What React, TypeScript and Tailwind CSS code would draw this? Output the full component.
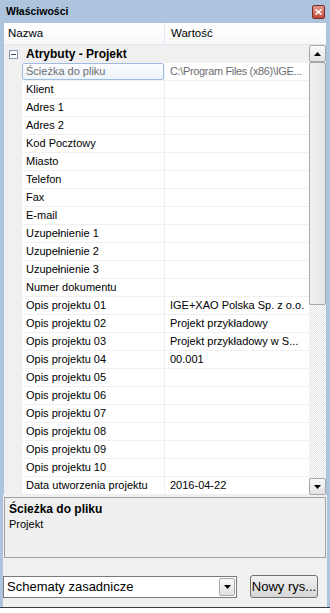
import React from "react";

const rows: [string, string][] = [
  ["Ścieżka do pliku", "C:\\Program Files (x86)\\IGE..."],
  ["Klient", ""],
  ["Adres 1", ""],
  ["Adres 2", ""],
  ["Kod Pocztowy", ""],
  ["Miasto", ""],
  ["Telefon", ""],
  ["Fax", ""],
  ["E-mail", ""],
  ["Uzupełnienie 1", ""],
  ["Uzupełnienie 2", ""],
  ["Uzupełnienie 3", ""],
  ["Numer dokumentu", ""],
  ["Opis projektu 01", "IGE+XAO Polska Sp. z o.o."],
  ["Opis projektu 02", "Projekt przykładowy"],
  ["Opis projektu 03", "Projekt przykładowy w S..."],
  ["Opis projektu 04", "00.001"],
  ["Opis projektu 05", ""],
  ["Opis projektu 06", ""],
  ["Opis projektu 07", ""],
  ["Opis projektu 08", ""],
  ["Opis projektu 09", ""],
  ["Opis projektu 10", ""],
  ["Data utworzenia projektu", "2016-04-22"],
];

function Arrow({ up }: { up: boolean }) {
  return (
    <svg width="7" height="4" viewBox="0 0 7 4">
      {up ? <path d="M0 4 L7 4 L3.5 0 Z" fill="#000" /> : <path d="M0 0 L7 0 L3.5 4 Z" fill="#000" />}
    </svg>
  );
}

export default function App() {
  return (
    <div className="w-[330px] h-[613px] bg-white font-['Liberation_Sans',Arial,sans-serif] text-[11px] text-black flex flex-col overflow-hidden">
      <div className="h-[607px] bg-[#adc4df] flex flex-col px-[4px]">
        {/* title bar */}
        <div className="h-[23px] flex items-center justify-between pl-[2px] shrink-0">
          <span className="font-bold text-[10.5px] leading-none">Właściwości</span>
          <div className="w-[13px] h-[14px] mr-[1px] rounded-[2px] border border-[#7a2a22] bg-gradient-to-b from-[#e29a8c] to-[#c0473a] flex items-center justify-center">
            <svg width="7" height="6" viewBox="0 0 7 6">
              <path d="M0.5 0.5 L6.5 5.5 M6.5 0.5 L0.5 5.5" stroke="#fff" strokeWidth="1.6" />
            </svg>
          </div>
        </div>

        {/* grid */}
        <div className="flex flex-col bg-white shrink-0">
          <div className="h-[22px] flex border-b border-[#e3e8ef] bg-gradient-to-b from-white to-[#f7f8fa] text-[11.5px]">
            <div className="w-[161px] pl-[4px] flex items-center border-r border-[#e3e8ef]">Nazwa</div>
            <div className="flex-1 pl-[6px] flex items-center">Wartość</div>
          </div>
          <div className="flex h-[450px]">
            <div className="w-[305px] flex flex-col">
              <div className="h-[18px] bg-[#f0f0f0] flex items-center shrink-0">
                <div className="w-[18px] flex items-center justify-center">
                  <div className="w-[9px] h-[9px] border border-[#8a9bb0] bg-white flex items-center justify-center">
                    <div className="w-[5px] h-[1px] bg-[#3a4a5e]" />
                  </div>
                </div>
                <span className="font-bold text-[12px] pl-[4px]">Atrybuty - Projekt</span>
              </div>
              {rows.map(([n, v], i) => (
                <div key={i} className="h-[18px] flex shrink-0 bg-[#f0f0f0]">
                  <div className="w-[18px]" />
                  {i === 0 ? (
                    <div className="w-[143px] h-[18px] bg-white border-b border-r border-[#f0f0f0] flex">
                      <div className="flex-1 rounded-[2px] border border-[#9ebbe0] bg-gradient-to-b from-[#fbfdff] to-[#eef4fb] flex items-center pl-[3px] text-[#6d6d6d]">
                        {n}
                      </div>
                    </div>
                  ) : (
                    <div className="w-[143px] bg-white border-b border-r border-[#f0f0f0] flex items-center pl-[4px] whitespace-nowrap overflow-hidden">
                      {n}
                    </div>
                  )}
                  <div
                    className={`flex-1 bg-white border-b border-[#f0f0f0] flex items-center pl-[5px] whitespace-nowrap overflow-hidden ${
                      i === 0 ? "text-[#6d6d6d] tracking-[-0.35px]" : "text-black"
                    }`}
                  >
                    {v}
                  </div>
                </div>
              ))}
            </div>
            {/* scrollbar */}
            <div className="w-[17px] flex flex-col bg-[repeating-conic-gradient(#e6e6e6_0%_25%,#fbfbfb_0%_50%)] bg-[length:2px_2px]">
              <div className="h-[17px] border border-[#a7a7a7] rounded-[2px] bg-gradient-to-b from-[#fafafa] to-[#e2e2e2] flex items-center justify-center shrink-0">
                <Arrow up />
              </div>
              <div className="h-[243px] border border-[#a7a7a7] rounded-[2px] bg-gradient-to-r from-[#f2f2f2] to-[#e4e4e4] shrink-0" />
              <div className="flex-1" />
              <div className="h-[17px] border border-[#a7a7a7] rounded-[2px] bg-gradient-to-b from-[#fafafa] to-[#e2e2e2] flex items-center justify-center shrink-0">
                <Arrow up={false} />
              </div>
            </div>
          </div>
        </div>

        {/* bottom area */}
        <div className="flex-1 bg-[#f0f0f0] flex flex-col pt-[2px] -mx-[1px] pl-[1px] pr-[1px]">
          <div className="h-[61px] border border-[#a0a0a0] bg-[#efefef] px-[4px] pt-[3px] flex flex-col">
            <span className="font-bold text-[12px] leading-[16px]">Ścieżka do pliku</span>
            <span className="text-[11px] leading-[14px]">Projekt</span>
          </div>
          <div className="flex items-center mt-[17px] -ml-[1px]">
            <div className="w-[234px] h-[22px] border border-[#7a7a7a] bg-white flex items-center">
              <span className="flex-1 text-[13px] pl-[3px] leading-none whitespace-nowrap">Schematy zasadnicze</span>
              <div className="w-[16px] h-[18px] mr-[1px] border border-[#a7a7a7] rounded-[2px] bg-gradient-to-b from-[#fafafa] to-[#e2e2e2] flex items-center justify-center">
                <Arrow up={false} />
              </div>
            </div>
            <div className="ml-[13px] w-[68px] h-[23px] border border-[#707070] rounded-[3px] bg-gradient-to-b from-[#f2f2f2] to-[#d6d6d6] flex items-center justify-center text-[13px] leading-none">
              Nowy rys...
            </div>
          </div>
        </div>
      </div>
      <div className="h-[1px] bg-[#3c3c3c]" />
      <div className="flex-1 bg-white" />
    </div>
  );
}
